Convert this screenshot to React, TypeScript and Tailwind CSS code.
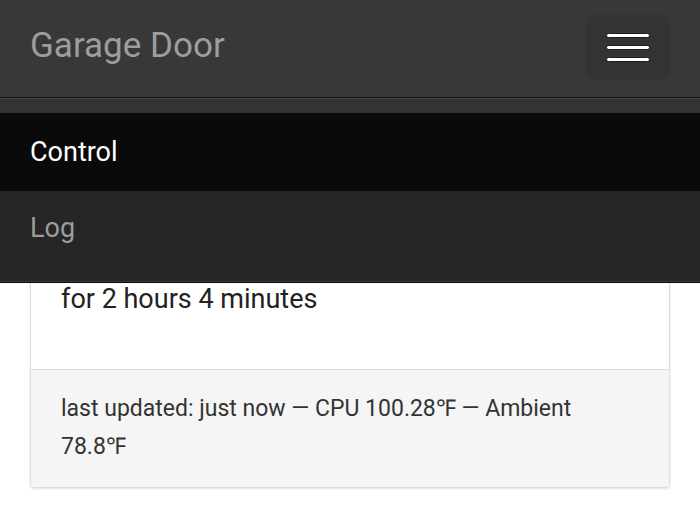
import React from 'react';

function MenuBars() {
  return (
    <div className="flex flex-col gap-[7px]">
      <span className="block h-[5px] w-[44px] rounded-full border border-[#1c1c1c] bg-white" />
      <span className="block h-[5px] w-[44px] rounded-full border border-[#1c1c1c] bg-white" />
      <span className="block h-[5px] w-[44px] rounded-full border border-[#1c1c1c] bg-white" />
    </div>
  );
}

export default function App() {
  return (
    <div className="relative min-h-[511px] bg-white font-['Roboto',sans-serif]">
      {/* fixed navbar with the collapse menu opened over the page */}
      <header className="absolute inset-x-0 top-0 z-10">
        <nav className="flex h-[98px] items-start justify-between border-b border-[#141414] bg-[#383838] px-[30px]">
          <a className="mt-[28px] text-[35px] leading-none text-[#9d9d9d]">Garage Door</a>
          <button className="mt-[15px] flex h-[65px] w-[84px] items-center justify-center rounded-lg bg-[#333333]">
            <MenuBars />
          </button>
        </nav>
        <div className="border-b border-[#0a0a0a] bg-[#262626]">
          <div className="h-[15px] border-t border-[#454545] bg-[#333333]" />
          <ul>
            <li className="flex h-[78px] items-center bg-[#0a0a0a] px-[30px] text-[27px] text-white">Control</li>
            <li className="flex h-[75px] items-center px-[30px] text-[27px] text-[#9d9d9d]">Log</li>
          </ul>
          <div className="h-[16px] border-b border-[#3a3a3a]" />
        </div>
      </header>

      <main className="px-[30px] pt-[176px]">
        <div className="overflow-hidden rounded-[4px] border border-[#dddddd] shadow-sm">
          <div className="px-[30px] pt-[104px] pb-[52px] text-[#222222]">
            <p className="text-[27px] leading-[36px]">for 2 hours 4 minutes</p>
          </div>
          <div className="border-t border-[#dddddd] bg-[#f5f5f5] px-[30px] pt-[20px] pb-[21px] text-[23px] leading-[38px] text-[#333333]">
            last updated: just now — CPU 100.28℉ — Ambient 78.8℉
          </div>
        </div>
      </main>
    </div>
  );
}
